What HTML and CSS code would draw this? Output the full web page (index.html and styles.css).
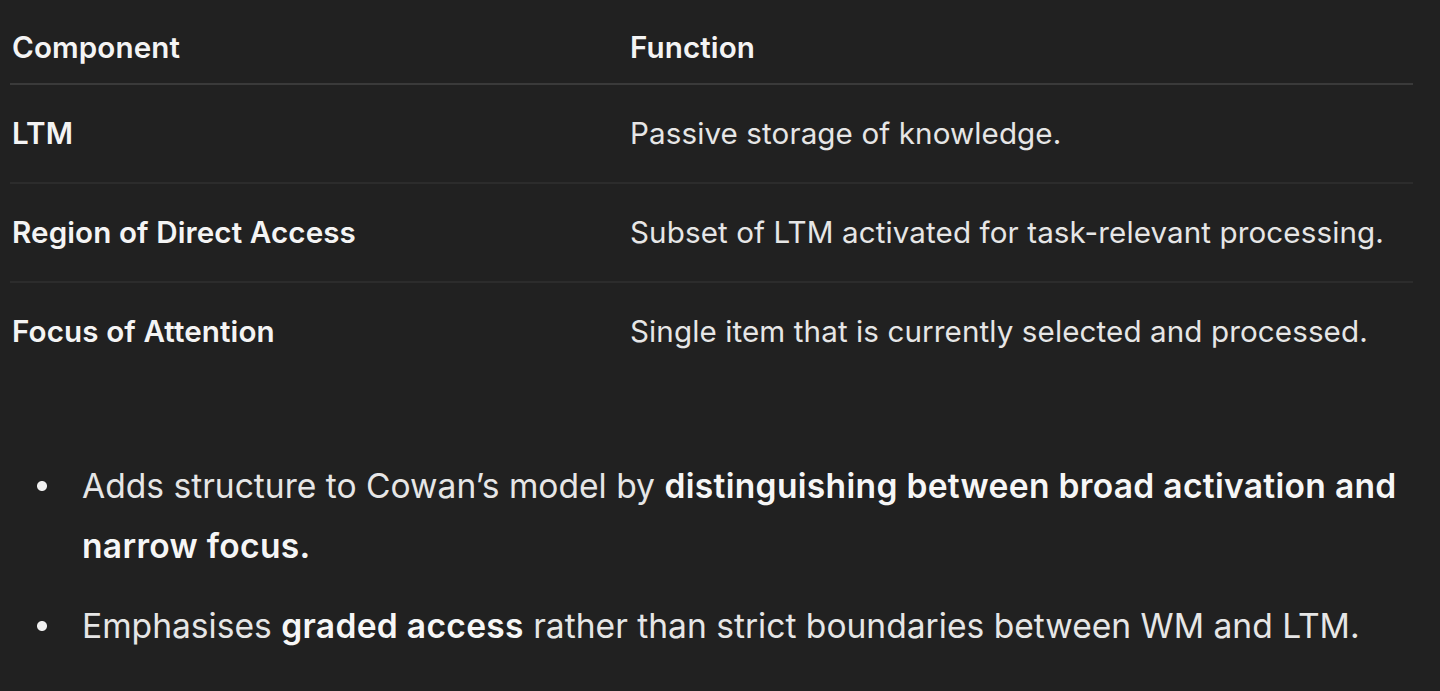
FILE: index.html
```html
<!DOCTYPE html>
<html>
<head>
<meta charset="utf-8">
<link rel="stylesheet" href="styles.css">
</head>
<body>
<div class="page">
  <div class="table-wrap">
    <table class="grid">
      <thead>
        <tr><th class="c1">Component</th><th class="c2">Function</th></tr>
      </thead>
      <tbody>
        <tr><td class="c1 strong">LTM</td><td class="c2">Passive storage of knowledge.</td></tr>
        <tr><td class="c1 strong">Region of Direct Access</td><td class="c2">Subset of LTM activated for task-relevant processing.</td></tr>
        <tr><td class="c1 strong">Focus of Attention</td><td class="c2">Single item that is currently selected and processed.</td></tr>
      </tbody>
    </table>
  </div>
  <ul class="points">
    <li>Adds structure to Cowan’s model by <b>distinguishing between broad activation and narrow focus.</b></li>
    <li>Emphasises <b>graded access</b> rather than strict boundaries between WM and LTM.</li>
  </ul>
</div>
</body>
</html>
```
FILE: styles.css
```css
html, body {
  margin: 0;
  padding: 0;
  background: #212121;
}
body {
  font-family: Inter, "Noto Sans", sans-serif;
  color: #ececec;
  height: 691px;
  overflow: hidden;
}
.page {
  padding: 12px 0 0 10px;
}
.table-wrap {
  width: 1403px;
}
.grid {
  width: 100%;
  border-collapse: collapse;
  font-size: 29.6px;
  letter-spacing: 0.1px;
}
.grid th {
  text-align: left;
  font-weight: 600;
  color: #f4f4f4;
  height: 69px;
  padding: 0 2px 2px;
  border-bottom: 2px solid #3a3a3a;
  vertical-align: middle;
}
.grid td {
  height: 95px;
  padding: 0 2px 2px;
  border-bottom: 2px solid #2c2c2c;
  vertical-align: middle;
  color: #e6e6e6;
}
.grid tbody tr:last-child td {
  border-bottom: none;
}
.grid .c1 { width: 614px; }
.grid td.strong { font-weight: 600; color: #f4f4f4; }
.points {
  list-style: none;
  margin: 76px 0 0 0;
  padding: 0 0 0 72px;
  font-size: 33.6px;
  line-height: 60px;
  color: #e6e6e6;
}
.points li {
  margin-bottom: 20px;
}
.points li::before {
  content: "";
  display: inline-block;
  width: 45px;
  height: 60px;
  margin-left: -45px;
  vertical-align: top;
  background: radial-gradient(circle at 5px 50%, #f0f0f0 0, #f0f0f0 4.5px, transparent 5.5px);
}
.points b {
  font-weight: 600;
  color: #f6f6f6;
  letter-spacing: 0.3px;
}
```
